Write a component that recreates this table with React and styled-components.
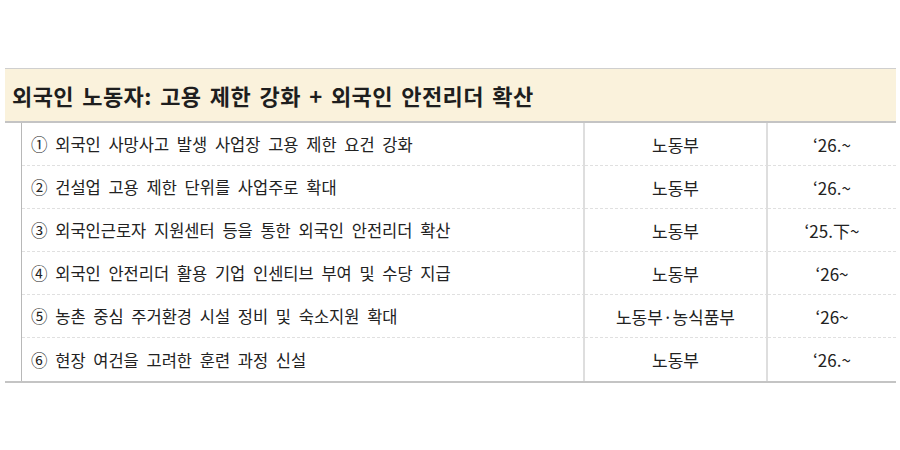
import React from 'react';
import styled, { createGlobalStyle } from 'styled-components';

const GlobalStyle = createGlobalStyle`
  body {
    margin: 0;
    background: #fff;
    font-family: "Noto Sans CJK KR", "Noto Sans", sans-serif;
    color: #222;
  }
`;

const Board = styled.div`
  margin: 68px 0 0 5px;
  width: 891px;
  border-top: 1px solid #cfcfcf;
  border-bottom: 2px solid #c4c4c4;
`;

const Header = styled.div`
  height: 52px;
  background: #faf2dc;
  border-bottom: 2px solid #c4c4c4;
  display: flex;
  align-items: center;
  padding-left: 7px;
  font-size: 22px;
  font-weight: 700;
  color: #1e1e1e;
  letter-spacing: 0.4px;
  word-spacing: 3px;
`;

const Body = styled.div`
  display: grid;
  grid-template-columns: 17px 563px 183px 1fr;
`;

const Spacer = styled.div`
  grid-row: span 6;
  border-right: 1px solid #b8b8b8;
`;

const Cell = styled.div`
  height: 43px;
  display: flex;
  align-items: center;
  justify-content: ${p => (p.$center ? 'center' : 'flex-start')};
  padding-left: ${p => (p.$center ? '0' : '9px')};
  font-size: ${p => (p.$center ? '17px' : '16.5px')};
  word-spacing: ${p => (p.$center ? '0' : '4px')};
  color: #222;
  border-bottom: ${p => (p.$last ? 'none' : '1px dashed #e0e0e0')};
  border-right: ${p => (p.$divider ? '2px solid #dedede' : 'none')};
  box-sizing: border-box;
`;

const rows = [
  ['① 외국인 사망사고 발생 사업장 고용 제한 요건 강화', '노동부', '‘26.~'],
  ['② 건설업 고용 제한 단위를 사업주로 확대', '노동부', '‘26.~'],
  ['③ 외국인근로자 지원센터 등을 통한 외국인 안전리더 확산', '노동부', '‘25.下~'],
  ['④ 외국인 안전리더 활용 기업 인센티브 부여 및 수당 지급', '노동부', '‘26~'],
  ['⑤ 농촌 중심 주거환경 시설 정비 및 숙소지원 확대', '노동부·농식품부', '‘26~'],
  ['⑥ 현장 여건을 고려한 훈련 과정 신설', '노동부', '‘26.~'],
];

export default function App() {
  return (
    <>
      <GlobalStyle />
      <Board>
        <Header>외국인 노동자: 고용 제한 강화 + 외국인 안전리더 확산</Header>
        <Body>
          <Spacer />
          {rows.map(([task, dept, when], i) => {
            const last = i === rows.length - 1;
            return (
              <React.Fragment key={i}>
                <Cell $last={last} $divider>{task}</Cell>
                <Cell $last={last} $center $divider>{dept}</Cell>
                <Cell $last={last} $center>{when}</Cell>
              </React.Fragment>
            );
          })}
        </Body>
      </Board>
    </>
  );
}
